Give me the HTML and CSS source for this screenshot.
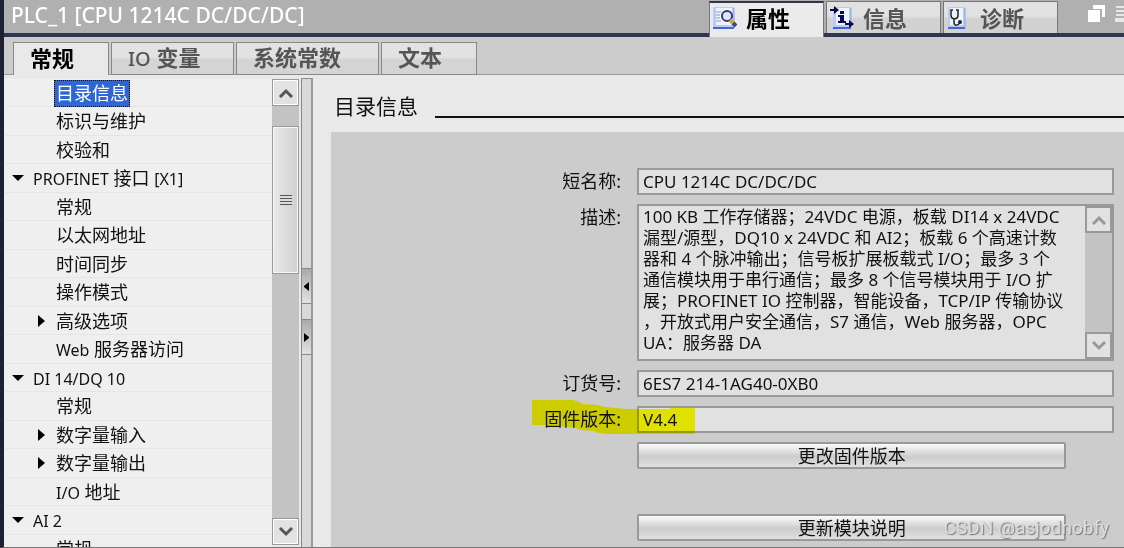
FILE: index.html
```html
<!DOCTYPE html>
<html lang="zh-CN">
<head>
  <meta charset="UTF-8">
  <meta name="viewport" content="width=device-width, initial-scale=1.0">
  <title>PLC_1 [CPU 1214C DC/DC/DC]</title>
  <link rel="stylesheet" href="styles.css">
</head>
<body>
  <div class="window">
    <header class="titlebar">
      <h1 class="title">PLC_1 [CPU 1214C DC/DC/DC]</h1>
      <div class="view-tabs">
        <button class="view-tab active">
          <svg width="25" height="24" viewBox="0 0 25 24">
            <rect x="0" y="1" width="21" height="21" fill="#b9cbf8"/>
            <rect x="3" y="2" width="16" height="17" fill="#eef3ff"/>
            <path d="M0 22h21" stroke="#4a63cf" stroke-width="2"/>
            <path d="M21 2v20" stroke="#8da0dc"/>
            <path d="M3 6h5M3 9h4M3 12h4M3 15h5" stroke="#8d9ab8"/>
            <circle cx="14" cy="10" r="5" fill="#dbe8fb" stroke="#383c70" stroke-width="2"/>
            <path d="M17 14l3 3" stroke="#e0a32e" stroke-width="4"/>
            <path d="M20 17l3 3" stroke="#2c4f96" stroke-width="4"/>
          </svg>
          <span>属性</span>
        </button>
        <button class="view-tab">
          <svg width="25" height="24" viewBox="0 0 25 24">
            <rect x="3" y="1" width="18" height="21" fill="#b9cbf8"/>
            <rect x="6" y="2" width="13" height="17" fill="#eef3ff"/>
            <path d="M3 22h18" stroke="#4a63cf" stroke-width="2"/>
            <path d="M21 2v20" stroke="#8da0dc"/>
            <path d="M0 3h4V0l5 4-5 4V5H0zM15 17h4v-3l5 4-5 4v-3h-4z" fill="#0a0a50"/>
            <path d="M10 5h4v3h-4zM8 9h6v6h2v2H8v-2h2v-4H8z" fill="#0a0a50"/>
          </svg>
          <span>信息</span>
        </button>
        <button class="view-tab">
          <svg width="25" height="24" viewBox="0 0 25 24">
            <rect x="1" y="1" width="17" height="21" fill="#b9cbf8"/>
            <rect x="3" y="2" width="13" height="17" fill="#eef3ff"/>
            <path d="M1 22h17" stroke="#4a63cf" stroke-width="2"/>
            <path d="M18 2v20" stroke="#8da0dc"/>
            <path d="M6 4H4v5c0 5 7 5 7 0V4H9M7 13v3c0 4 3 4 6 1" fill="none" stroke="#222" stroke-width="1.5"/>
            <circle cx="13" cy="16" r="2" fill="#222"/>
          </svg>
          <span>诊断</span>
        </button>
      </div>
      <div class="window-icons">
        <svg width="18" height="18" viewBox="0 0 18 18">
          <path d="M5 0h12v12h-3V4H5z" fill="#fff"/>
          <path d="M0 5h12v12H0z" fill="#fff"/>
        </svg>
        <svg width="9" height="18" viewBox="0 0 9 18">
          <path d="M1 1h8v2H1zM1 5h8v2H1zM1 9h8v2H1zM0 13h9v4H0z" fill="#e8e8e8"/>
        </svg>
      </div>
    </header>

    <nav class="page-tabs">
      <button class="page-tab general active">常规</button>
      <button class="page-tab io-tags"><span class="latin">IO</span> 变量</button>
      <button class="page-tab constants">系统常数</button>
      <button class="page-tab texts">文本</button>
    </nav>

    <div class="workspace">
      <ul class="tree">
        <li class="child"><a class="selected" href="#">目录信息</a></li>
        <li class="child"><a href="#">标识与维护</a></li>
        <li class="child"><a href="#">校验和</a></li>
        <li class="open"><a href="#"><span class="latin">PROFINET</span> 接口 <span class="latin">[X1]</span></a></li>
        <li class="child"><a href="#">常规</a></li>
        <li class="child"><a href="#">以太网地址</a></li>
        <li class="child"><a href="#">时间同步</a></li>
        <li class="child"><a href="#">操作模式</a></li>
        <li class="child closed"><a href="#">高级选项</a></li>
        <li class="child"><a href="#"><span class="latin">Web</span> 服务器访问</a></li>
        <li class="open"><a href="#"><span class="latin">DI 14/DQ 10</span></a></li>
        <li class="child"><a href="#">常规</a></li>
        <li class="child closed"><a href="#">数字量输入</a></li>
        <li class="child closed"><a href="#">数字量输出</a></li>
        <li class="child"><a href="#"><span class="latin">I/O</span> 地址</a></li>
        <li class="open"><a href="#"><span class="latin">AI 2</span></a></li>
        <li class="child"><a href="#">常规</a></li>
      </ul>
      <div class="scrollbar">
        <button class="scroll-btn" aria-label="向上滚动">
          <svg width="16" height="10" viewBox="0 0 16 10"><path d="M2 9l6-6 6 6" fill="none" stroke="currentColor" stroke-width="3"/></svg>
        </button>
        <div class="track"><div class="thumb"></div></div>
        <button class="scroll-btn" aria-label="向下滚动">
          <svg width="16" height="10" viewBox="0 0 16 10"><path d="M2 1l6 6 6-6" fill="none" stroke="currentColor" stroke-width="3"/></svg>
        </button>
      </div>
      <div class="splitter">
        <button class="collapse" aria-label="折叠左侧">
          <svg width="5" height="9" viewBox="0 0 5 9"><path d="M5 0v9L0 5V4z"/></svg>
        </button>
        <button class="collapse" aria-label="折叠右侧">
          <svg width="5" height="9" viewBox="0 0 5 9"><path d="M0 0v9l5-4V4z"/></svg>
        </button>
      </div>

      <main class="content">
        <h2 class="section-title"><span>目录信息</span></h2>
        <form class="panel">
          <label for="shortName">短名称:</label>
          <input class="field" type="text" id="shortName" value="CPU 1214C DC/DC/DC" readonly>

          <label for="description">描述:</label>
          <div class="description">
            <textarea id="description" readonly>100 KB 工作存储器；24VDC 电源，板载 DI14 x 24VDC
漏型/源型，DQ10 x 24VDC 和 AI2；板载 6 个高速计数
器和 4 个脉冲输出；信号板扩展板载式 I/O；最多 3 个
通信模块用于串行通信；最多 8 个信号模块用于 I/O 扩
展；PROFINET IO 控制器，智能设备，TCP/IP 传输协议
，开放式用户安全通信，S7 通信，Web 服务器，OPC
UA：服务器 DA</textarea>
            <div class="scrollbar muted">
              <button type="button" class="scroll-btn" aria-label="向上滚动">
                <svg width="16" height="10" viewBox="0 0 16 10"><path d="M2 9l6-6 6 6" fill="none" stroke="currentColor" stroke-width="3"/></svg>
              </button>
              <div class="track"></div>
              <button type="button" class="scroll-btn" aria-label="向下滚动">
                <svg width="16" height="10" viewBox="0 0 16 10"><path d="M2 1l6 6 6-6" fill="none" stroke="currentColor" stroke-width="3"/></svg>
              </button>
            </div>
          </div>

          <label for="orderNo">订货号:</label>
          <input class="field" type="text" id="orderNo" value="6ES7 214-1AG40-0XB0" readonly>

          <label class="marked" for="firmware">固件版本:
            <svg class="marker" width="163" height="35" viewBox="0 0 163 35">
              <path d="M0 1h41l6 2 4 2 14 1 9 2 20 2h43l1-1h25v26H76l-10-1-4-2-14-1-4-2-11-1-6-2H0z" fill="#ff0"/>
            </svg>
          </label>
          <input class="field" type="text" id="firmware" value="V4.4" readonly>

          <button type="button" class="action">更改固件版本</button>
          <button type="button" class="action update">更新模块说明</button>
        </form>
      </main>
    </div>
    <div class="watermark">CSDN @asjodnobfy</div>
  </div>
</body>
</html>
```
FILE: styles.css
```css
* {
  box-sizing: border-box;
}
body {
  margin: 0;
  font-family: 'Noto Sans', 'Noto Sans CJK SC', sans-serif;
  font-size: 18px;
  color: #111;
}
button, input, textarea {
  font-family: inherit;
  color: inherit;
  margin: 0;
}
button {
  padding: 0;
  cursor: pointer;
}
svg {
  display: block;
}
.latin {
  font-size: 16px;
}
.window {
  position: relative;
  height: 100vh;
  display: flex;
  flex-direction: column;
  border-left: 4px solid #1d2233;
  border-bottom: 1px solid #777;
  background: #e9e9e9;
  overflow: hidden;
}

/* title bar */
.titlebar {
  display: flex;
  flex: none;
  height: 37px;
  background: #b0b0b0;
  border-bottom: 4px solid #2d3653;
}
.title {
  flex: 1;
  margin: 0;
  padding-left: 7px;
  font-size: 21px;
  font-weight: 500;
  line-height: 30px;
  color: #fff;
  white-space: nowrap;
}
.view-tabs {
  display: flex;
  gap: 2px;
  padding-top: 1px;
}
.view-tab {
  display: flex;
  align-items: center;
  gap: 8px;
  width: 115px;
  height: 32px;
  padding-left: 3px;
  border: 1px solid #777;
  border-bottom: none;
  background: linear-gradient(#e2e2e2 45%, #d2d2d2 55%);
  font-size: 22px;
  font-weight: bold;
  line-height: 30px;
  color: #555;
}
.view-tab.active {
  height: 36px;
  padding-bottom: 5px;
  border-top: 2px solid #2d3653;
  background: #ebebeb;
  color: #000;
}
.window-icons {
  display: flex;
  gap: 9px;
  padding: 5px 0 0 30px;
}

/* page tabs */
.page-tabs {
  display: flex;
  align-items: flex-end;
  flex: none;
  gap: 2px;
  height: 38px;
  padding-left: 9px;
  background: #ccc;
  box-shadow: inset 0 -1px #999;
}
.page-tab {
  height: 33px;
  border: 1px solid #888;
  background: linear-gradient(#e2e2e2 45%, #d4d4d4 55%);
  padding: 0 0 3px 16px;
  font-size: 22px;
  font-weight: bold;
  line-height: 28px;
  text-align: left;
  white-space: nowrap;
  color: #555;
}
.page-tab.active {
  border-bottom: none;
  background: #e9e9e9;
  color: #000;
}
.page-tab .latin {
  font-size: 20px;
  font-weight: 500;
}
.general {
  width: 96px;
}
.io-tags {
  width: 123px;
}
.constants {
  width: 143px;
}
.texts {
  width: 96px;
}

/* workspace */
.workspace {
  display: flex;
  flex: 1;
  min-height: 0;
}
.tree {
  width: 268px;
  flex: none;
  margin: 4px 0 0;
  padding: 0 0 0 1px;
  list-style: none;
  background: #efefef;
  overflow: hidden;
}
.tree li {
  position: relative;
  height: 28px;
  padding-left: 26px;
  border-bottom: 1px solid #e5e5e5;
  line-height: 28px;
  white-space: nowrap;
}
.tree li:nth-child(even) {
  height: 29px;
}
.tree li.child {
  padding-left: 49px;
}
.tree a {
  display: inline-block;
  padding: 0 2px;
  line-height: 27px;
  color: inherit;
  text-decoration: none;
}
.tree a.selected {
  background: #2f66d6;
  color: #fff;
  outline: 1px dotted #111;
  outline-offset: -1px;
}
.open::before, .closed::before {
  content: '';
  position: absolute;
  left: 7px;
  top: 11px;
  border: 6px solid transparent;
  border-top-color: #000;
  border-bottom: none;
}
.closed::before {
  left: 33px;
  top: 8px;
  border: 6px solid transparent;
  border-left: 7px solid #000;
  border-right: none;
}
.scrollbar {
  display: flex;
  flex-direction: column;
  flex: none;
  width: 27px;
  color: #555;
  background: #c3c3c3;
}
.workspace > .scrollbar {
  margin: 4px 0 2px;
}
.scroll-btn {
  display: grid;
  place-items: center;
  height: 27px;
  border: 1px solid #999;
  box-shadow: inset 0 0 0 1px #fff;
  background: #e2e2e2;
  color: inherit;
}
.track {
  flex: 1;
  padding-top: 20px;
}
.thumb {
  height: 148px;
  border: 1px solid #999;
  box-shadow: inset 0 0 0 1px #f6f6f6;
  background:
    repeating-linear-gradient(#555 0 1px, #ddd 1px 3px) center / 12px 10px no-repeat,
    linear-gradient(90deg, #e9e9e9, #cfcfcf);
}
.splitter {
  display: flex;
  flex-direction: column;
  gap: 15px;
  flex: none;
  width: 12px;
  margin: 3px 0 0 2px;
  padding-top: 189px;
  border: 1px solid #888;
  border-right: 2px solid #999;
  border-bottom: none;
  background: #d9d9d9;
}
.collapse {
  display: grid;
  place-items: center;
  height: 36px;
  border: 0 solid #888;
  border-width: 1px 0;
  background: linear-gradient(#aaa, #e2e2e2);
}

/* content */
.content {
  display: flex;
  flex-direction: column;
  flex: 1;
  min-width: 0;
  padding-left: 18px;
}
.section-title {
  display: flex;
  gap: 17px;
  margin: 0;
  padding: 19px 0 13px 3px;
  font-size: 21px;
  font-weight: normal;
  line-height: 25px;
}
.section-title::after {
  content: '';
  flex: 1;
  margin-bottom: 1px;
  border-bottom: 2px solid #111;
}
.panel {
  display: grid;
  grid-template-columns: 290px 1fr;
  column-gap: 16px;
  row-gap: 9px;
  align-content: start;
  flex: 1;
  padding: 36px 10px 0 0;
  background: #ccc;
}
.panel label {
  line-height: 27px;
  text-align: right;
}
.field {
  width: 100%;
  height: 27px;
  padding: 0 4px;
  border: 2px solid #999;
  background: #e1e1e1;
  font-size: 17px;
}
.description {
  display: flex;
  height: 157px;
  border: 2px solid #999;
  background: #e1e1e1;
}
.description textarea {
  flex: 1;
  min-width: 0;
  padding: 0 0 0 4px;
  border: none;
  outline: none;
  resize: none;
  overflow: hidden;
  background: transparent;
  font-size: 17px;
  line-height: 21px;
  white-space: pre;
}
.muted {
  color: #999;
}
.muted .scroll-btn {
  box-shadow: none;
  border-width: 2px;
}
.action {
  grid-column: 2;
  width: 90%;
  height: 27px;
  border: 2px solid #999;
  border-radius: 2px;
  background: linear-gradient(#fafafa, #cdcdcd 55%, #e0e0e0);
  font-size: 18px;
  line-height: 22px;
}
.update {
  margin-top: 36px;
}

/* highlighter stroke over the firmware row */
.marked {
  position: relative;
}
.marker {
  position: absolute;
  left: 201px;
  top: -7px;
  z-index: 1;
  mix-blend-mode: multiply;
  pointer-events: none;
}
.watermark {
  position: absolute;
  right: 15px;
  bottom: 5px;
  font-family: Roboto, sans-serif;
  font-size: 19px;
  line-height: 28px;
  color: #ddd;
  text-shadow: 1px 1px 1px #777;
}
```
